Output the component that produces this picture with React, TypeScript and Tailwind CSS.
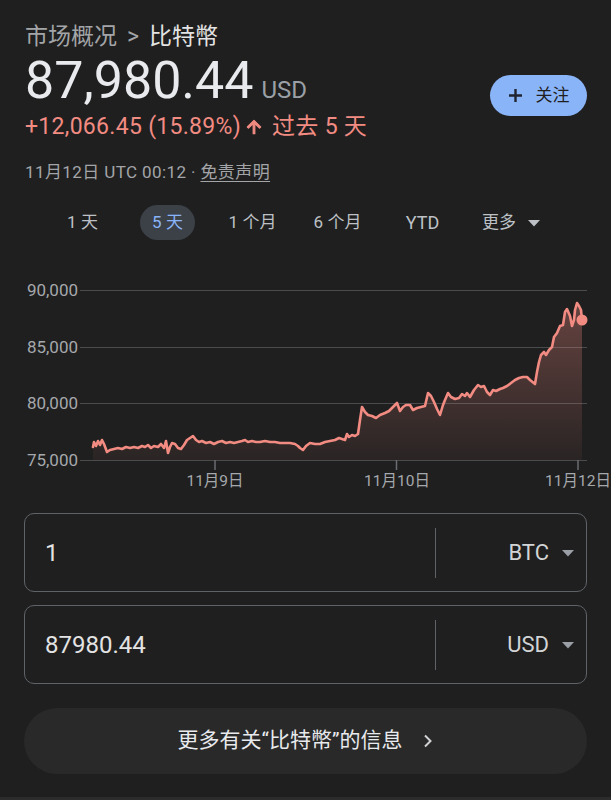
import React from 'react';

const FONT = "font-['Roboto','Noto_Sans_CJK_SC',sans-serif]";

// rough price path, already in page coordinates (y: 290 = 90k, 460 = 75k)
const PTS: [number, number][] = [
  [93, 447], [94, 442], [96, 446], [98, 441], [100, 445], [102, 440], [104, 444], [107, 452],
  [110, 450], [114, 449], [118, 448], [122, 449], [126, 447], [130, 448], [134, 447], [138, 448],
  [142, 446], [145, 447], [148, 445], [151, 448], [154, 446], [158, 447], [161, 444], [164, 448],
  [166, 441], [168, 453], [170, 447], [172, 443], [175, 444], [178, 448], [181, 449], [184, 445],
  [187, 440], [190, 438], [193, 436], [196, 440], [199, 442], [202, 441], [206, 443], [210, 442],
  [214, 444], [218, 442], [222, 441], [226, 443], [230, 442], [234, 443], [238, 442], [242, 441],
  [245, 440], [248, 442], [252, 441], [256, 442], [260, 442], [265, 441], [270, 442], [275, 442],
  [280, 443], [285, 443], [290, 443], [295, 444], [298, 446], [300, 448], [303, 450], [306, 446],
  [310, 443], [315, 444], [320, 444], [325, 442], [330, 441], [335, 440], [339, 438], [342, 439],
  [345, 440], [347, 434], [349, 437], [352, 435], [355, 436], [358, 434], [360, 420], [362, 407],
  [365, 412], [368, 415], [372, 416], [376, 418], [380, 415], [385, 413], [389, 411], [393, 407],
  [397, 403], [400, 411], [403, 407], [406, 405], [410, 405], [413, 410], [417, 408], [421, 407],
  [425, 406], [428, 393], [431, 396], [434, 402], [437, 409], [440, 415], [443, 405], [445, 400],
  [448, 393], [451, 397], [455, 399], [459, 398], [462, 394], [465, 396], [467, 393], [470, 397],
  [474, 390], [478, 385], [481, 387], [484, 386], [487, 392], [490, 395], [493, 390], [496, 391],
  [500, 389], [503, 388], [507, 386], [511, 383], [515, 380], [519, 378], [523, 377], [527, 377],
  [530, 380], [535, 384], [537, 372], [539, 362], [541, 355], [544, 352], [546, 355], [549, 350],
  [552, 347], [554, 337], [557, 333], [560, 326], [563, 325], [565, 312], [567, 309], [570, 316],
  [572, 326], [574, 320], [575, 310], [577, 303], [579, 306], [581, 310], [582, 320],
];

const linePath = PTS.map(([x, y], i) => `${i ? 'L' : 'M'}${x},${y}`).join(' ');
const areaPath = `${linePath} L582,460 L93,460 Z`;

const Caret = ({ color = '#9aa0a6' }: { color?: string }) => (
  <svg width="14" height="8" viewBox="0 0 14 8">
    <path d="M1 1h12L7 7.5z" fill={color} />
  </svg>
);

const Chart = () => (
  <svg className="block mt-[40px]" width="611" height="220" viewBox="0 280 611 220">
    <defs>
      <linearGradient id="fill" x1="0" y1="300" x2="0" y2="460" gradientUnits="userSpaceOnUse">
        <stop offset="0" stopColor="#f28b82" stopOpacity="0.34" />
        <stop offset="1" stopColor="#f28b82" stopOpacity="0.05" />
      </linearGradient>
    </defs>
    {[290, 347, 403, 460].map((y) => (
      <line key={y} x1="80" x2="587" y1={y + 0.5} y2={y + 0.5} stroke="#4a4b4d" strokeWidth="1.2" />
    ))}
    {[215, 396.5, 578].map((x) => (
      <line key={x} x1={x} x2={x} y1="460" y2="470" stroke="#6b6d70" strokeWidth="1.5" />
    ))}
    <g fill="#a5a8ac" fontSize="17" fontFamily="Roboto, 'Noto Sans CJK SC', sans-serif" textAnchor="end">
      <text x="78" y="296">90,000</text>
      <text x="78" y="353">85,000</text>
      <text x="78" y="409">80,000</text>
      <text x="78" y="466">75,000</text>
    </g>
    <g fill="#a5a8ac" fontSize="15.5" fontFamily="Roboto, 'Noto Sans CJK SC', sans-serif" textAnchor="middle">
      <text x="215" y="486">11月9日</text>
      <text x="397" y="486">11月10日</text>
      <text x="578" y="486">11月12日</text>
    </g>
    <path d={areaPath} fill="url(#fill)" />
    <path d={linePath} fill="none" stroke="#f28b82" strokeWidth="2.6" strokeLinejoin="round" strokeLinecap="round" />
    <circle cx="582" cy="320" r="5.5" fill="#f28b82" />
  </svg>
);

const Converter = ({ value, unit, top }: { value: string; unit: string; top: string }) => (
  <div className={`mx-[24px] ${top} h-[79px] flex items-center rounded-[10px] border border-[#5f6368]`}>
    <div className="flex-1 pl-[20px] text-[24px] text-[#e3e3e3]">{value}</div>
    <div className="w-px h-[50px] bg-[#5f6368]" />
    <div className="w-[150px] flex items-center justify-end gap-[12px] pr-[11px]">
      <span className="text-[22px] text-[#d2d4d6]">{unit}</span>
      <Caret />
    </div>
  </div>
);

const TABS = ['1 天', '5 天', '1 个月', '6 个月', 'YTD'];

export default function App() {
  return (
    <div className={`w-[611px] h-[800px] overflow-hidden bg-[#1f1f1f] ${FONT}`}>
      <div className="flex justify-between pl-[25px] pr-[24px]">
        <div className="pt-[23px]">
          <div className="h-[28px] leading-[28px] text-[23px] text-[#a3a5a8] flex">
            <span>市场概况</span>
            <span className="mx-[10px]">&gt;</span>
            <span className="text-[#e3e3e3]">比特幣</span>
          </div>
          <div className="flex items-baseline h-[60px]">
            <span className="text-[52px] leading-[60px] text-[#e8eaed]">87,980.44</span>
            <span className="ml-[8px] text-[24px] text-[#9aa0a6]">USD</span>
          </div>
          <div className="mt-[2px] h-[28px] flex items-center text-[23px] tracking-[0.3px] text-[#f28b82]">
            <span>+12,066.45 (15.89%)</span>
            <svg className="ml-[3px] mr-[8px]" width="20" height="20" viewBox="0 0 24 24">
              <path d="M4 12l1.41 1.41L11 7.83V20h2V7.83l5.58 5.59L20 12l-8-8-8 8z" fill="#f28b82" stroke="#f28b82" strokeWidth="1.4" strokeLinejoin="round" />
            </svg>
            <span>过去 5 天</span>
          </div>
          <div className="mt-[19px] h-[24px] leading-[24px] text-[17px] tracking-[0.4px] text-[#a3a5a8]">
            11月12日 UTC 00:12 · <span className="underline underline-offset-[3px]">免责声明</span>
          </div>
        </div>
        <div className="pt-[75px]">
          <button className="h-[41px] w-[97px] flex items-center justify-center gap-[13px] rounded-full bg-[#8ab4f8] text-[17px] text-[#1f1f1f]">
            <svg width="15" height="15" viewBox="0 0 15 15">
              <path d="M7.5 1v13M1 7.5h13" stroke="#1f2430" strokeWidth="2.4" />
            </svg>
            <span>关注</span>
          </button>
        </div>
      </div>

      <div className="mt-[21px] h-[35px] flex items-center pl-[40px] text-[17px] text-[#bdc1c6]">
        {TABS.map((t) => (
          <div key={t} className="w-[85px] flex justify-center">
            {t === '5 天' ? (
              <span className="h-[35px] px-[12px] flex items-center rounded-full bg-[#3c4148] text-[#8ab4f8]">{t}</span>
            ) : (
              <span className={t === 'YTD' ? 'text-[18px]' : ''}>{t}</span>
            )}
          </div>
        ))}
        <div className="w-[85px] flex justify-center items-center gap-[11px] pl-[8px]">
          <span>更多</span>
          <Caret color="#bdc1c6" />
        </div>
      </div>

      <Chart />

      <Converter value="1" unit="BTC" top="mt-[13px]" />
      <Converter value="87980.44" unit="USD" top="mt-[13px]" />

      <button className="mx-[24px] mt-[24px] w-[563px] h-[66px] flex items-center justify-center gap-[21px] rounded-full bg-[#292929] text-[21px] text-[#e8eaed]">
        <span>更多有关“比特幣”的信息</span>
        <svg width="10" height="14" viewBox="0 0 10 14">
          <path d="M2 1.5l5.5 5.5L2 12.5" fill="none" stroke="#d0d2d4" strokeWidth="2" />
        </svg>
      </button>

      <div className="mt-[23px] h-[3px] bg-[#2c2c2c]" />
    </div>
  );
}
